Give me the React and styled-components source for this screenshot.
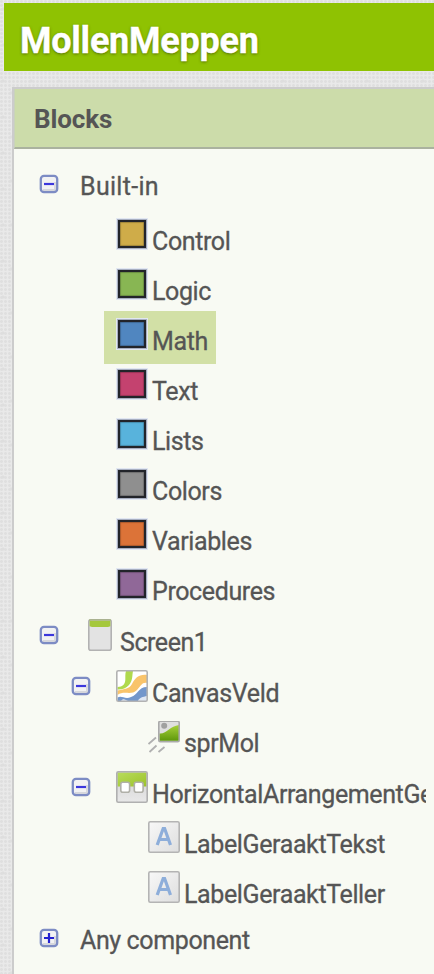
import React from "react";
import styled, { createGlobalStyle } from "styled-components";

const Global = createGlobalStyle`
  * { box-sizing: border-box; }
  html, body { margin: 0; padding: 0; overflow: hidden; }
`;

const Page = styled.div`
  height: 974px;
  width: 434px;
  overflow: hidden;
  padding: 3px 0 0 4px;
  font-family: Roboto, sans-serif;
  color: #555;
  background-color: #e9e9e9;
  background-image:
    radial-gradient(circle at 3px 9px, #dedede 1px, transparent 2px),
    radial-gradient(circle at 11px 5px, #dfdfdf 1px, transparent 2px),
    radial-gradient(circle at 1.5px 1.5px, #dfdfdf 1px, transparent 1.8px);
  background-size: 28px 36px, 20px 44px, 4px 4px;
`;

const TitleBar = styled.header`
  height: 68px;
  padding: 16px 0 0 16px;
  background: #8fc202;
`;

const Title = styled.h1`
  margin: 0;
  font-size: 36px;
  line-height: 44px;
  font-weight: 700;
  letter-spacing: -0.25px;
  color: #fff;
  -webkit-text-stroke: 0.4px #fff;
  text-shadow: 0 1px 3px rgba(50, 60, 0, 0.7);
`;

const Panel = styled.section`
  margin: 16px 0 0 8px;
  height: 900px;
  border-left: 2px solid #ccc;
  border-top: 2px solid #ccc;
  background: #f8faf3;
`;

const PanelHeader = styled.h2`
  margin: 0;
  height: 60px;
  padding: 15px 0 0 19px;
  border-bottom: 2px solid #aab29f;
  border-left: 1px solid #c9d3bb;
  background: #ccdcaa;
  font-size: 26px;
  line-height: 30px;
  font-weight: 700;
  letter-spacing: -0.1px;
`;

const Tree = styled.div`
  margin-top: 12px;
  width: 412px;
  overflow: hidden;
`;

const Row = styled.div`
  display: flex;
  align-items: flex-start;
  height: ${(p) => p.$height || 50}px;
  padding-left: ${(p) => p.$indent}px;
`;

const Item = styled.div`
  display: flex;
  align-items: flex-start;
  flex: none;
  height: 53px;
  padding: 0 8px 0 12px;
  background: ${(p) => (p.$selected ? "#d2e0a6" : "transparent")};
`;

const Label = styled.span`
  flex: none;
  margin-top: ${(p) => p.$top}px;
  margin-left: ${(p) => p.$gap || 0}px;
  font-size: 25px;
  line-height: 30px;
  letter-spacing: ${(p) => p.$tracking ?? -0.38}px;
  -webkit-text-stroke: 0.3px #555;
  white-space: nowrap;
`;

const Swatch = styled.span`
  flex: none;
  width: 28px;
  height: 28px;
  margin: 9px 6px 0 2px;
  border: 2px solid #22242a;
  box-shadow: 0 0 0 1px #a7aec0, 0 0 0 2px #e1e7f2, inset 0 0 1px 0.5px rgba(0, 0, 0, 0.4);
  background: ${(p) => p.$color};
`;

const Toggle = styled.svg`
  flex: none;
  width: 20px;
  height: 20px;
  margin-top: ${(p) => p.$top}px;
`;

const Icon = styled.svg`
  flex: none;
  width: ${(p) => p.$width || 32}px;
  height: 32px;
  margin-top: 8px;
  margin-left: ${(p) => p.$gap || 0}px;
`;

function Expander({ top, open = true }) {
  return (
    <Toggle $top={top} viewBox="0 0 20 20">
      <rect x="1.8" y="1.8" width="16.4" height="16.4" rx="3.2" fill="#f2f2f3" />
      <path d="M4 16 16 16 16 8" fill="none" stroke="#d6d7dc" strokeWidth="1.8" />
      <rect x="1.8" y="1.8" width="16.4" height="16.4" rx="3.2" fill="none" stroke="#7d8cc4" strokeWidth="2.3" />
      <path d={open ? "M5 10H15" : "M5 10H15M10 5V15"} stroke={open ? "#3c37dc" : "#2420d0"} strokeWidth="2.2" />
    </Toggle>
  );
}

function ScreenIcon() {
  return (
    <Icon $width={24} $gap={29} viewBox="0 0 24 32">
      <rect x="0.8" y="0.8" width="22.4" height="30.4" rx="2" fill="#e3e3e3" stroke="#b2b2b2" strokeWidth="1.6" />
      <path d="M1.6 1.7H22.4V7.2L20 8H4L1.6 7.2Z" fill="#a5c83c" />
      <path d="M1 1H23" stroke="#a3b36f" strokeWidth="1" />
    </Icon>
  );
}

function CanvasIcon() {
  return (
    <Icon $gap={25} viewBox="0 0 32 32">
      <rect x="0.8" y="0.8" width="30.4" height="30.4" rx="1.5" fill="#fff" />
      <path d="M10 1H17C16 6 17 10 13 15C10 18.5 5 20 1.5 19.5V17C7 17 9 14 9.3 10C9.5 7 9 4 10 1Z" fill="#b0d94e" />
      <path d="M31 5V13C26 12 25 16 21 20C15 26 8 20 1.5 25V20.5C9 19 13 19 16 14C19 8 23 4 31 5Z" fill="#f9c46b" />
      <path d="M31 17V31H1.5V27.5C6 25 9 30 15 27C22 25 22 17 31 17Z" fill="#7397cb" />
      <path d="M5 31C7 27.5 10 30 12 31ZM22 31C23 27.5 27 27 31 26V31Z" fill="#dfe7f3" />
      <rect x="0.8" y="0.8" width="30.4" height="30.4" rx="1.5" fill="none" stroke="#b2b2b2" strokeWidth="1.6" />
    </Icon>
  );
}

function SpriteIcon() {
  return (
    <Icon viewBox="0 0 32 32">
      <defs>
        <linearGradient id="hill" x1="0" y1="0" x2="0" y2="1">
          <stop offset="0" stopColor="#a7d13a" />
          <stop offset="1" stopColor="#5f980b" />
        </linearGradient>
      </defs>
      <rect x="10.8" y="0.3" width="20.4" height="20.4" rx="1.5" fill="#dfdfdf" />
      <circle cx="16.2" cy="4.8" r="3" fill="#a0a0a0" />
      <path d="M11.5 12.5C19 13 22 5 31 4V19.7H11.5Z" fill="url(#hill)" />
      <rect x="10.8" y="0.3" width="20.4" height="20.4" rx="1.5" fill="none" stroke="#aaa" strokeWidth="1.6" />
      <path d="M0.5 23 8 16.5M1.5 31 8.500 24.5M10.5 31 16.5 26" stroke="#b0b0b0" strokeWidth="1.8" />
    </Icon>
  );
}

function ArrangementIcon() {
  return (
    <Icon $gap={25} viewBox="0 0 32 32">
      <defs>
        <linearGradient id="roof" x1="0" y1="0" x2="1" y2="1">
          <stop offset="0" stopColor="#b8dc5c" />
          <stop offset="1" stopColor="#9cc22a" />
        </linearGradient>
        <linearGradient id="base" x1="0" y1="0" x2="0" y2="1">
          <stop offset="0" stopColor="#d2d2d2" />
          <stop offset="1" stopColor="#e8e8e8" />
        </linearGradient>
      </defs>
      <rect x="0.8" y="0.8" width="30.4" height="30.4" rx="1.5" fill="url(#base)" />
      <rect x="1.5" y="1.5" width="29" height="14" fill="url(#roof)" />
      <rect x="4.8" y="11.3" width="8.8" height="10" rx="2" fill="#fff" stroke="#b0b0a8" strokeWidth="1.6" />
      <rect x="18.3" y="11.3" width="8.8" height="10" rx="2" fill="#fff" stroke="#b0b0a8" strokeWidth="1.6" />
      <rect x="0.8" y="0.8" width="30.4" height="30.4" rx="1.5" fill="none" stroke="#b0b0b0" strokeWidth="1.6" />
    </Icon>
  );
}

function LabelIcon() {
  return (
    <Icon viewBox="0 0 32 32">
      <defs>
        <linearGradient id="tile" x1="0" y1="0" x2="1" y2="1">
          <stop offset="0" stopColor="#f8f8f8" />
          <stop offset="1" stopColor="#dedede" />
        </linearGradient>
      </defs>
      <rect x="0.8" y="0.8" width="30.4" height="30.4" rx="1.5" fill="url(#tile)" stroke="#b4b4b4" strokeWidth="1.6" />
      <path d="M9.2 24 15.2 7.5H16.6L22.5 24M11.5 18.5H20.3" fill="none" stroke="#8eaeda" strokeWidth="3.2" />
    </Icon>
  );
}

const BLOCKS = [
  { name: "Control", color: "#cfac49" },
  { name: "Logic", color: "#88b653" },
  { name: "Math", color: "#5086c0", selected: true },
  { name: "Text", color: "#c4426f" },
  { name: "Lists", color: "#58b3dc" },
  { name: "Colors", color: "#8f8f8f" },
  { name: "Variables", color: "#dc7338" },
  { name: "Procedures", color: "#906898" },
];

export default function App() {
  return (
    <>
      <Global />
      <Page>
        <TitleBar>
          <Title>MollenMeppen</Title>
        </TitleBar>
        <Panel>
          <PanelHeader>Blocks</PanelHeader>
          <Tree>
            <Row $indent={25}>
              <Expander top={13} />
              <Label $top={11} $gap={21} $tracking={0.3}>Built-in</Label>
            </Row>
            {BLOCKS.map((b) => (
              <Row key={b.name} $indent={90}>
                <Item $selected={b.selected}>
                  <Swatch $color={b.color} />
                  <Label $top={16}>{b.name}</Label>
                </Item>
              </Row>
            ))}
            <Row $indent={25} $height={51}>
              <Expander top={14} />
              <ScreenIcon />
              <Label $top={17} $gap={8} $tracking={-0.45}>Screen1</Label>
            </Row>
            <Row $indent={57} $height={51}>
              <Expander top={14} />
              <CanvasIcon />
              <Label $top={17} $gap={4}>CanvasVeld</Label>
            </Row>
            <Row $indent={134} $height={50}>
              <SpriteIcon />
              <Label $top={16} $gap={4}>sprMol</Label>
            </Row>
            <Row $indent={57}>
              <Expander top={14} />
              <ArrangementIcon />
              <Label $top={17} $gap={4}>HorizontalArrangementGe</Label>
            </Row>
            {["LabelGeraaktTekst", "LabelGeraaktTeller"].map((name) => (
              <Row key={name} $indent={134}>
                <LabelIcon />
                <Label $top={17} $gap={4}>{name}</Label>
              </Row>
            ))}
            <Row $indent={25}>
              <Expander top={15} open={false} />
              <Label $top={13} $gap={21}>Any component</Label>
            </Row>
          </Tree>
        </Panel>
      </Page>
    </>
  );
}
